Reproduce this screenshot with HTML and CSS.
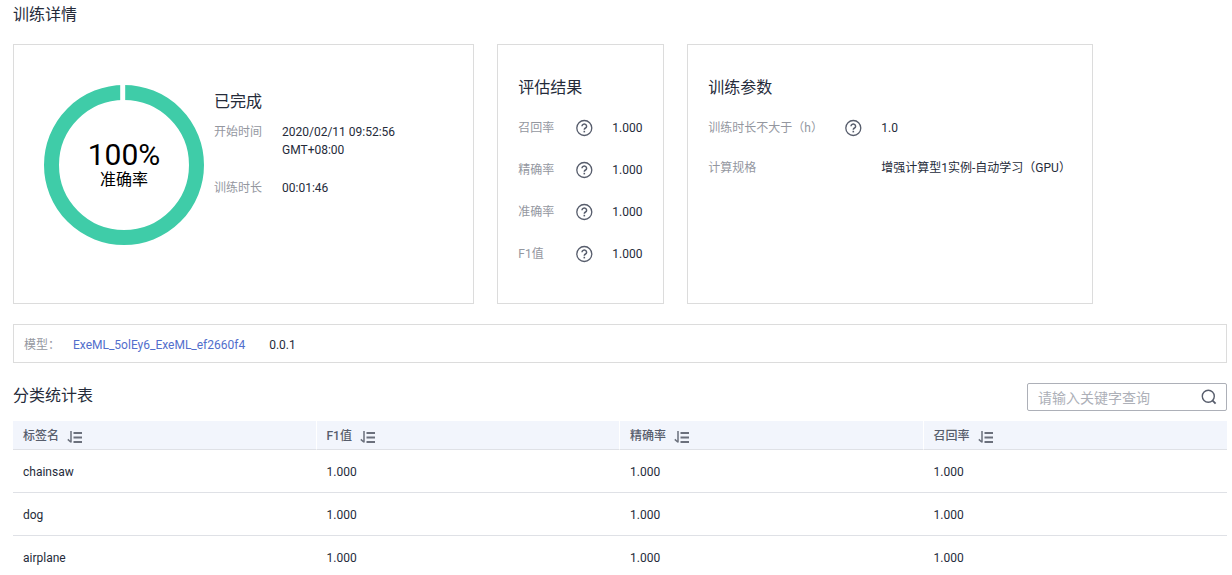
FILE: index.html
```html
<!DOCTYPE html>
<html lang="zh-CN">
<head>
    <meta charset="UTF-8">
    <meta name="viewport" content="width=device-width, initial-scale=1.0">
    <title>训练详情</title>
    <link rel="stylesheet" href="styles.css">
</head>
<body>
    <svg class="defs" aria-hidden="true">
        <symbol id="help" viewBox="0 0 18 18">
            <circle cx="9.3" cy="9" r="7.5" fill="none" stroke="#575d6c" stroke-width="1.3"/>
            <path d="M7 7.2a2.3 2.1 0 1 1 3.5 1.8c-.8.5-1.2.8-1.2 1.7" fill="none" stroke="#575d6c" stroke-width="1.5"/>
            <path d="M8.5 11.8h1.6v1.6H8.5z" fill="#575d6c"/>
        </symbol>
        <symbol id="sort" viewBox="0 0 16 14">
            <path d="M4 1v11.5M4 12.2L.8 9.4" fill="none" stroke="#6b707c" stroke-width="1.5"/>
            <path d="M6.5 3H15M6.5 7.5H15M6.5 12H15" fill="none" stroke="#6b707c" stroke-width="1.9"/>
        </symbol>
    </svg>

    <h1 class="title">训练详情</h1>

    <div class="cards">
        <section class="card status">
            <div class="ring">
                <svg viewBox="0 0 160 160" width="160" height="160" aria-hidden="true">
                    <circle cx="80" cy="80" r="72.5" fill="none" stroke="#3fcca8" stroke-width="15"/>
                    <path d="M78.7 0v16" stroke="#fff" stroke-width="5"/>
                </svg>
                <div class="ring-text">
                    <span class="percent">100%</span>
                    <span class="caption">准确率</span>
                </div>
            </div>
            <div class="status-info">
                <h2 class="title">已完成</h2>
                <dl class="times">
                    <dt>开始时间</dt>
                    <dd>2020/02/11 09:52:56<br>GMT+08:00</dd>
                    <dt>训练时长</dt>
                    <dd>00:01:46</dd>
                </dl>
            </div>
        </section>

        <section class="card">
            <h2 class="title">评估结果</h2>
            <dl class="metrics">
                <dt>召回率</dt>
                <dd><svg class="help"><use href="#help"/></svg>1.000</dd>
                <dt>精确率</dt>
                <dd><svg class="help"><use href="#help"/></svg>1.000</dd>
                <dt>准确率</dt>
                <dd><svg class="help"><use href="#help"/></svg>1.000</dd>
                <dt>F1值</dt>
                <dd><svg class="help"><use href="#help"/></svg>1.000</dd>
            </dl>
        </section>

        <section class="card">
            <h2 class="title">训练参数</h2>
            <dl class="params">
                <dt>训练时长不大于（h）<svg class="help"><use href="#help"/></svg></dt>
                <dd>1.0</dd>
                <dt>计算规格</dt>
                <dd>增强计算型1实例-自动学习（GPU）</dd>
            </dl>
        </section>
    </div>

    <div class="model">
        <span class="label">模型：</span>
        <a href="#">ExeML_5olEy6_ExeML_ef2660f4</a>
        <span>0.0.1</span>
    </div>

    <div class="toolbar">
        <h2 class="title">分类统计表</h2>
        <form class="search">
            <input type="text" placeholder="请输入关键字查询" aria-label="请输入关键字查询">
            <button type="button" aria-label="查询">
                <svg viewBox="0 0 16 16" width="16" height="16">
                    <circle cx="7.3" cy="7.2" r="6" fill="none" stroke="#575d6c" stroke-width="1.4"/>
                    <path d="M11.4 11.4l3.2 3.2" stroke="#575d6c" stroke-width="1.8"/>
                </svg>
            </button>
        </form>
    </div>

    <table class="stats">
        <thead>
            <tr>
                <th>标签名<button type="button" aria-label="排序"><svg><use href="#sort"/></svg></button></th>
                <th>F1值<button type="button" aria-label="排序"><svg><use href="#sort"/></svg></button></th>
                <th>精确率<button type="button" aria-label="排序"><svg><use href="#sort"/></svg></button></th>
                <th>召回率<button type="button" aria-label="排序"><svg><use href="#sort"/></svg></button></th>
            </tr>
        </thead>
        <tbody>
            <tr><td>chainsaw</td><td>1.000</td><td>1.000</td><td>1.000</td></tr>
            <tr><td>dog</td><td>1.000</td><td>1.000</td><td>1.000</td></tr>
            <tr><td>airplane</td><td>1.000</td><td>1.000</td><td>1.000</td></tr>
        </tbody>
    </table>
</body>
</html>
```

FILE: styles.css
```css
* {
    box-sizing: border-box;
}
body {
    margin: 0;
    padding: 2px 5px 0 13px;
    font-family: Roboto, "Noto Sans CJK SC", sans-serif;
    font-size: 12px;
    line-height: 18px;
    color: #252b3a;
    background-color: #fff;
}
.defs {
    display: none;
}
.title {
    margin: 0;
    font-size: 16px;
    font-weight: 400;
    line-height: 26px;
}
dl, dd {
    margin: 0;
}
dt, .label {
    color: #94979f;
}

/* cards */
.cards {
    display: grid;
    grid-template-columns: 38% 167px 406px;
    gap: 23px;
    margin-top: 16px;
}
.card {
    min-height: 260px;
    padding: 30px 20px;
    border: 1px solid #dcdcdc;
}
.status {
    display: flex;
    gap: 10px;
    padding: 40px 30px;
}
.ring {
    display: grid;
    align-self: flex-start;
}
.ring > * {
    grid-area: 1 / 1;
}
.ring-text {
    display: flex;
    flex-direction: column;
    align-items: center;
    justify-content: center;
    color: #000;
}
.percent {
    font-size: 30px;
    line-height: 30px;
}
.caption {
    font-size: 16px;
    line-height: 20px;
}
.status-info {
    padding-top: 4px;
}
.times {
    display: grid;
    grid-template-columns: 48px auto;
    gap: 20px;
    margin-top: 8px;
}
.metrics {
    display: grid;
    grid-template-columns: 57px auto;
    row-gap: 24px;
    margin-top: 18px;
}
.metrics dd {
    display: flex;
    gap: 19px;
}
.params {
    display: grid;
    grid-template-columns: 154px auto;
    column-gap: 19px;
    row-gap: 22px;
    margin-top: 18px;
}
.params dt {
    display: flex;
    justify-content: space-between;
}
.params dd {
    white-space: nowrap;
}
.help {
    width: 18px;
    height: 18px;
}

/* model */
.model {
    display: flex;
    margin-top: 20px;
    padding: 11px 10px 8px;
    border: 1px solid #dcdcdc;
}
.model .label {
    width: 49px;
}
.model a {
    margin-right: 24px;
    color: #526ecc;
    text-decoration: none;
}

/* table */
.toolbar {
    display: flex;
    justify-content: space-between;
    margin: 20px 0 10px;
}
.search {
    display: flex;
    width: 200px;
    height: 28px;
    border: 1px solid #adb0b8;
    border-radius: 2px;
}
.search input {
    flex: 1;
    min-width: 0;
    padding: 2px 10px 0;
    border: none;
    outline: none;
    background: none;
    font-family: inherit;
    font-size: 14px;
}
.search input::placeholder {
    color: #adb0b8;
}
button {
    padding: 0;
    border: none;
    background: none;
    cursor: pointer;
}
.search button {
    display: flex;
    align-items: center;
    width: 25px;
}
.stats {
    width: 100%;
    border-collapse: separate;
    border-spacing: 0;
    table-layout: fixed;
}
.stats th {
    height: 29px;
    padding: 2px 10px 0;
    background-color: #f2f5fc;
    border-bottom: 1px solid #dfe1e6;
    border-right: 1px solid #fff;
    color: #575d6c;
    font-weight: 500;
    text-align: left;
}
.stats th:last-child {
    border-right: none;
}
.stats th button {
    margin-left: 8px;
    vertical-align: middle;
}
.stats th svg {
    display: block;
    width: 16px;
    height: 14px;
}
.stats td {
    height: 43px;
    padding: 2px 10px 0;
    border-bottom: 1px solid #dfe1e6;
}
```
